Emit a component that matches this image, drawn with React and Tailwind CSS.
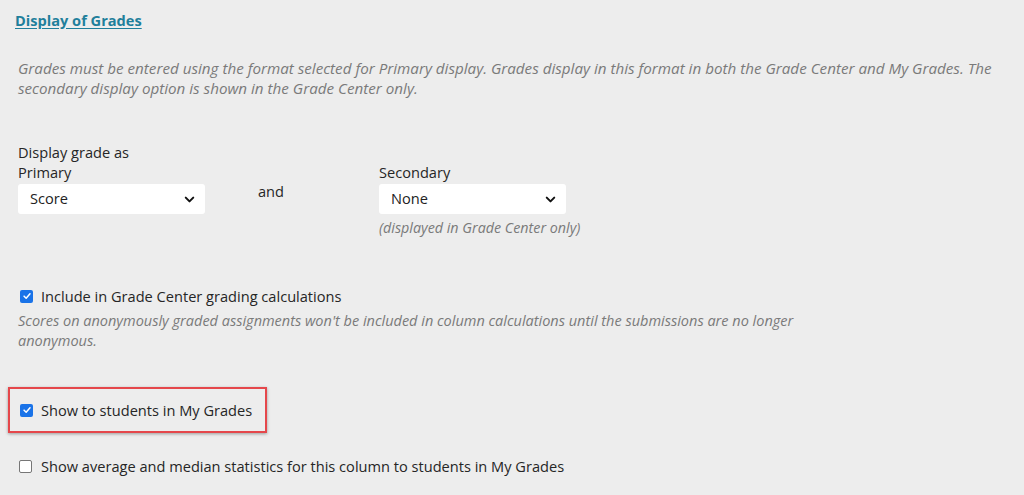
import { ChevronDown } from 'lucide-react'

const FONT = { fontFamily: '"Open Sans", "Noto Sans", sans-serif' }

function Check({ checked }) {
  return checked ? (
    <span className="flex h-[13px] w-[13px] flex-shrink-0 items-center justify-center rounded-[2px] bg-[#1a73e8]">
      <svg viewBox="0 0 12 12" className="h-[10px] w-[10px]">
        <path d="M2.5 6.2 L5 8.6 L9.6 3.4" fill="none" stroke="white" strokeWidth="1.8" strokeLinecap="round" strokeLinejoin="round" />
      </svg>
    </span>
  ) : (
    <span className="h-[13px] w-[13px] flex-shrink-0 rounded-[2px] border border-[#767676] bg-white" />
  )
}

function Select({ value }) {
  return (
    <div className="mt-[2px] flex h-[30px] w-[187px] items-center justify-between rounded-[3px] bg-white pl-3 pr-[8px] text-[14.6px] text-[#222]">
      <span>{value}</span>
      <ChevronDown size={15} strokeWidth={3.2} className="text-[#111]" />
    </div>
  )
}

export default function App() {
  return (
    <div style={FONT} className="h-[495px] w-[1024px] overflow-hidden bg-[#ededed] pl-[15px] pt-[8px] text-[#262626]">
      <a href="#" className="text-[14.6px] font-bold leading-[22px] text-[#1f7f9b] underline underline-offset-2">
        Display of Grades
      </a>

      <p className="mt-[26px] max-w-[995px] pl-[3px] text-[15.2px] italic leading-[20px] text-[#7a7a7a]">
        Grades must be entered using the format selected for Primary display. Grades display in this format in both the Grade Center and My Grades. The secondary display option is shown in the Grade Center only.
      </p>

      <div className="mt-[44px] pl-[3px] text-[14.6px] leading-[20px]">Display grade as</div>
      <div className="flex pl-[3px]">
        <div className="w-[240px]">
          <div className="text-[14.6px] leading-[20px]">Primary</div>
          <Select value="Score" />
        </div>
        <div className="w-[121px] pt-[19px] text-[14.6px] leading-[20px]">and</div>
        <div>
          <div className="text-[14.6px] leading-[20px]">Secondary</div>
          <Select value="None" />
          <div className="mt-[4px] text-[14.3px] italic leading-[20px] text-[#7a7a7a]">(displayed in Grade Center only)</div>
        </div>
      </div>

      <div className="mt-[48px] flex items-center gap-[8px] pl-[5px] text-[14.6px] leading-[20px]">
        <Check checked />
        <span>Include in Grade Center grading calculations</span>
      </div>
      <p className="mt-[5px] max-w-[800px] pl-[3px] text-[14.5px] italic leading-[20px] text-[#7a7a7a]">
        Scores on anonymously graded assignments won't be included in column calculations until the submissions are no longer anonymous.
      </p>

      <div className="ml-[-7px] mt-[36px] flex h-[46px] w-[259px] items-center gap-[8px] border-2 border-[#e5474b] pl-[10px] text-[14.6px] leading-[20px] shadow-[0_1px_3px_rgba(0,0,0,0.35)]">
        <Check checked />
        <span>Show to students in My Grades</span>
      </div>

      <div className="mt-[23px] flex items-center gap-[9px] pl-[4px] text-[14.6px] leading-[20px]">
        <Check checked={false} />
        <span>Show average and median statistics for this column to students in My Grades</span>
      </div>
    </div>
  )
}
